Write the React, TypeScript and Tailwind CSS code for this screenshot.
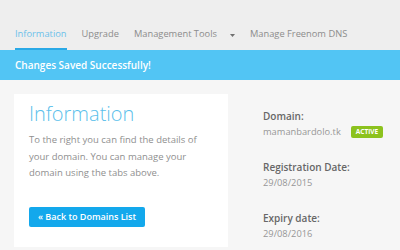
import React from 'react';

const tabs = ['Information', 'Upgrade', 'Management Tools'];

const details = [
  { label: 'Domain:', value: 'mamanbardolo.tk', badge: 'ACTIVE' },
  { label: 'Registration Date:', value: '29/08/2015' },
  { label: 'Expiry date:', value: '29/08/2016' },
];

export default function App() {
  return (
    <div className="w-[400px] h-[250px] overflow-hidden bg-[#f6f6f6] font-['Open_Sans',sans-serif]">
      {/* Tabs */}
      <nav className="h-[50px] bg-[#eeeeee] flex items-end gap-[15px] px-[15px] text-[9.3px] leading-[16px]">
        {tabs.map((t, i) => (
          <span
            key={t}
            className={`pb-[6px] border-b-2 ${
              i === 0 ? 'border-[#2aa9e6] text-[#6cc1ea]' : 'border-transparent text-[#8c8c8c]'
            }`}
          >
            {t}
          </span>
        ))}
        <span className="pb-[6px] border-b-2 border-transparent flex items-center h-[24px] -ml-[2px]">
          <svg width="5" height="3" viewBox="0 0 5 3" className="mb-[-2px]">
            <path d="M0 0h5L2.5 3z" fill="#707070" />
          </svg>
        </span>
        <span className="pb-[6px] border-b-2 border-transparent text-[#8c8c8c]">Manage Freenom DNS</span>
      </nav>

      {/* Success banner */}
      <div className="h-[30px] bg-[#52c5f4] px-[15px] flex items-center text-white text-[10px] font-semibold">
        Changes Saved Successfully!
      </div>

      <div className="flex pt-[14px] pl-[14px]">
        {/* Info card */}
        <div className="w-[214px] h-[153px] bg-white px-[15px] pt-[10px]">
          <h1 className="text-[20px] leading-[20px] font-light text-[#5bbfeb]">Information</h1>
          <p className="mt-[8px] text-[9.5px] leading-[16.5px] text-[#8f8f8f]">
            To the right you can find the details of your domain. You can manage your domain using the tabs above.
          </p>
          <button className="mt-[25px] h-[20px] px-[9px] bg-[#13a8ec] text-white text-[9px] font-semibold rounded-[2px]">
            « Back to Domains List
          </button>
        </div>

        {/* Domain details */}
        <div className="ml-[35px] pt-[14px] flex flex-col gap-[19px]">
          {details.map((d) => (
            <div key={d.label} className="leading-[16px]">
              <div className="text-[10px] font-semibold text-[#676767]">{d.label}</div>
              <div className="flex items-center text-[9.3px] text-[#969696]">
                {d.value}
                {d.badge && (
                  <span className="ml-[10px] h-[12px] px-[5px] flex items-center bg-[#8cc21e] text-white text-[6.5px] font-bold rounded-[2px]">
                    {d.badge}
                  </span>
                )}
              </div>
            </div>
          ))}
        </div>
      </div>
    </div>
  );
}
